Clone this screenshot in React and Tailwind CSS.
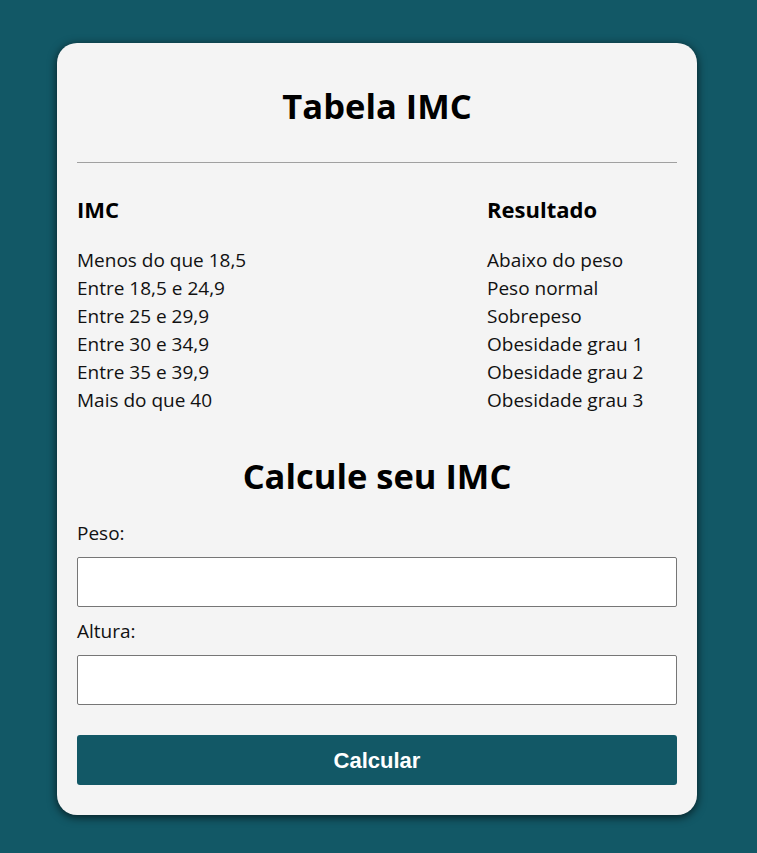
import React from 'react';

const rows = [
  ['Menos do que 18,5', 'Abaixo do peso'],
  ['Entre 18,5 e 24,9', 'Peso normal'],
  ['Entre 25 e 29,9', 'Sobrepeso'],
  ['Entre 30 e 34,9', 'Obesidade grau 1'],
  ['Entre 35 e 39,9', 'Obesidade grau 2'],
  ['Mais do que 40', 'Obesidade grau 3'],
];

// Tabela + calculadora de IMC
const App = () => {
  return (
    <div className="min-h-screen bg-[#125866] pt-[43px] pb-[38px] font-['Open_Sans',sans-serif] text-[#111]">
      <div className="ml-[57px] w-[640px] rounded-[20px] bg-[#f4f4f4] px-[20px] pt-[20px] pb-[30px] shadow-[0_2px_10px_rgba(0,0,0,0.7)]">
        <h1 className="mt-[18px] text-center text-[34.5px] font-bold leading-[49px] text-black">Tabela IMC</h1>
        <hr className="mt-[32px] border-t border-[#a0a0a0]" />

        <div className="mt-[33px] grid grid-cols-[410px_1fr]">
          <div className="text-[22px] font-bold leading-[27px] text-black">IMC</div>
          <div className="text-[22px] font-bold leading-[27px] text-black">Resultado</div>
        </div>
        <div className="mt-[23px] grid grid-cols-[410px_1fr] text-[19px] leading-[28px]">
          {rows.map(([imc, res]) => (
            <React.Fragment key={imc}>
              <div>{imc}</div>
              <div>{res}</div>
            </React.Fragment>
          ))}
        </div>

        <h2 className="mt-[37px] text-center text-[34.5px] font-bold leading-[49px] text-black">Calcule seu IMC</h2>

        <form className="mt-[21px] flex flex-col" onSubmit={(e) => e.preventDefault()}>
          <label className="text-[19px] leading-[24px]">Peso:</label>
          <input type="text" className="mt-[12px] h-[50px] w-full rounded-[2px] border border-[#767676] bg-white px-2 outline-none" />
          <label className="mt-[12px] text-[19px] leading-[24px]">Altura:</label>
          <input type="text" className="mt-[12px] h-[50px] w-full rounded-[2px] border border-[#767676] bg-white px-2 outline-none" />
          <button type="submit" className="mt-[30px] h-[50px] w-full rounded-[3px] bg-[#125866] font-['Liberation_Sans',Arial,sans-serif] text-[22px] font-bold text-white">
            Calcular
          </button>
        </form>
      </div>
    </div>
  );
};

export default App;
